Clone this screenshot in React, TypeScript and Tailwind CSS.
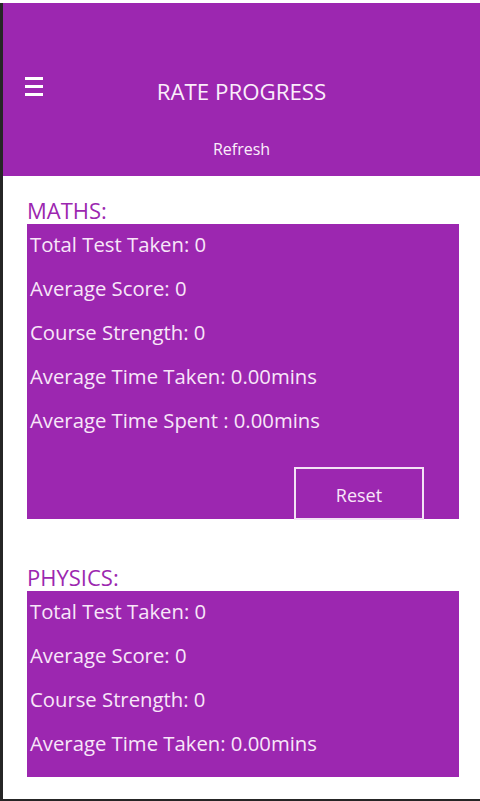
const font = { fontFamily: '"Open Sans", "Liberation Sans", sans-serif' };

type Stat = { label: string; value: string };

const maths: Stat[] = [
    { label: 'Total Test Taken', value: '0' },
    { label: 'Average Score', value: '0' },
    { label: 'Course Strength', value: '0' },
    { label: 'Average Time Taken', value: '0.00mins' },
    { label: 'Average Time Spent ', value: '0.00mins' },
];

const physics: Stat[] = [
    { label: 'Total Test Taken', value: '0' },
    { label: 'Average Score', value: '0' },
    { label: 'Course Strength', value: '0' },
    { label: 'Average Time Taken', value: '0.00mins' },
];

function StatLines({ stats }: { stats: Stat[] }) {
    return (
        <div className="flex flex-col gap-[6px] pt-[1px]">
            {stats.map((s) => (
                <div key={s.label} className="pl-[3px] text-[20.3px] leading-[38px] text-[#f8e6f9] whitespace-pre">
                    {s.label}: {s.value}
                </div>
            ))}
        </div>
    );
}

export default function App() {
    return (
        <div className="h-[801px] w-[480px] bg-white pt-[3px]" style={font}>
            <div className="flex h-[798px] flex-col border-b-2 border-l-[3px] border-[#262626] bg-white">
                {/* header */}
                <div className="h-[173px] bg-[#9c27b0] pt-[67px]">
                    <div className="grid grid-cols-[1fr_auto_1fr] items-center">
                        <button className="ml-[22px] -mt-[11px] flex w-[18px] flex-col gap-[5px]">
                            <span className="h-[3px] w-[18px] bg-white" />
                            <span className="h-[3px] w-[18px] bg-white" />
                            <span className="h-[3px] w-[18px] bg-white" />
                        </button>
                        <h1 className="text-[22.3px] leading-[44px] text-[#fbeefb]">RATE PROGRESS</h1>
                        <div />
                    </div>
                    <div className="mt-[22px] text-center text-[16px] leading-[26px] text-[#fbeefb]">Refresh</div>
                </div>

                {/* content */}
                <div className="pl-[24px] pr-[21px] pt-[20px]">
                    <div className="text-[22px] leading-[28px] text-[#9c27b0]">MATHS:</div>
                    <div className="bg-[#9c27b0]">
                        <StatLines stats={maths} />
                        <div className="mt-[28px] flex justify-end pr-[35px]">
                            <button className="-mb-px h-[53px] w-[130px] border-[2.5px] border-[#f3e2f5] pt-[4px] text-[18px] text-[#f8e6f9]">
                                Reset
                            </button>
                        </div>
                    </div>

                    <div className="mt-[44px] text-[22px] leading-[28px] text-[#9c27b0]">PHYSICS:</div>
                    <div className="bg-[#9c27b0] pb-[15px]">
                        <StatLines stats={physics} />
                    </div>
                </div>
            </div>
        </div>
    );
}
